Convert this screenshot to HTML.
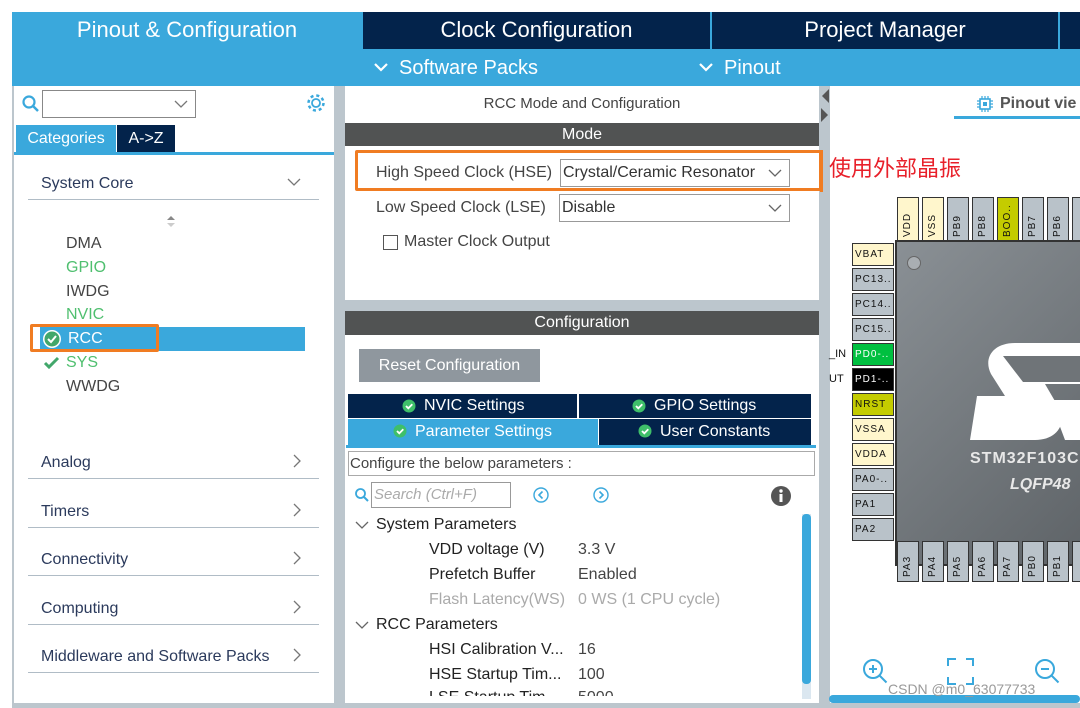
<!DOCTYPE html>
<html><head><meta charset="utf-8"><style>
*{margin:0;padding:0;box-sizing:border-box}
body{width:1080px;height:708px;background:#fff;position:relative;overflow:hidden;font-family:"Liberation Sans","Noto Sans CJK SC",sans-serif;color:#333}
.a{position:absolute}
.t{position:absolute;white-space:nowrap}
.pin{position:absolute;background:#b9c2c9;border:1px solid #333;font-size:10px;color:#111;letter-spacing:1px}
.pv{width:22px;height:44px;writing-mode:vertical-rl;transform:rotate(180deg);text-align:left;padding-top:3px;line-height:20px}
.ph{width:42px;height:23px;line-height:22px;padding-left:2px}
.cat{position:absolute;left:28px;width:291px;height:36px;border-bottom:1px solid #b0bcc6;font-size:16px;color:#2b3a5c}
.cat span{position:absolute;left:13px;bottom:6px}
.cat svg{position:absolute;right:18px;bottom:10px}
</style></head><body>
<div class="a" style="left:12px;top:12px;width:1068px;height:74px;background:#3aa8dc"></div>
<div class="a" style="left:363px;top:12px;width:347px;height:37px;background:#03234b"></div>
<div class="a" style="left:712px;top:12px;width:346px;height:37px;background:#03234b"></div>
<div class="a" style="left:1060px;top:12px;width:20px;height:37px;background:#03234b"></div>
<div class="t" style="left:12px;width:350px;top:17px;text-align:center;color:#fff;font-size:22px">Pinout &amp; Configuration</div>
<div class="t" style="left:363px;width:347px;top:17px;text-align:center;color:#fff;font-size:22px">Clock Configuration</div>
<div class="t" style="left:712px;width:346px;top:17px;text-align:center;color:#fff;font-size:22px">Project Manager</div>
<svg class="a" style="left:373px;top:62px" width="16" height="12"><path d="M2 2l6 6 6-6" stroke="#fff" stroke-width="2.2" fill="none"/></svg>
<div class="t" style="left:399px;top:57px;color:#fff;font-size:20px">Software Packs</div>
<svg class="a" style="left:698px;top:62px" width="16" height="12"><path d="M2 2l6 6 6-6" stroke="#fff" stroke-width="2.2" fill="none"/></svg>
<div class="t" style="left:724px;top:57px;color:#fff;font-size:20px">Pinout</div>
<div class="a" style="left:12px;top:86px;width:1068px;height:622px;background:#bcc6cd"></div>
<!-- left panel -->
<div class="a" style="left:14px;top:86px;width:320px;height:617px;background:#fff"></div>
<svg class="a" style="left:21px;top:94px" width="20" height="20"><circle cx="8" cy="8" r="5.5" stroke="#3aa8dc" stroke-width="2.2" fill="none"/><path d="M12 12l5 5" stroke="#3aa8dc" stroke-width="2.5"/></svg>
<div class="a" style="left:42px;top:90px;width:154px;height:28px;border:1px solid #888;background:#fff"></div>
<svg class="a" style="left:174px;top:99px" width="14" height="10"><path d="M1 2l6 6 6-6" stroke="#777" stroke-width="1.3" fill="none"/></svg>
<svg class="a" style="left:305px;top:92px" width="22" height="22" viewBox="0 0 22 22"><circle cx="11" cy="11" r="4" stroke="#3aa8dc" stroke-width="1.8" fill="none"/><circle cx="11" cy="11" r="7.5" stroke="#3aa8dc" stroke-width="2.5" stroke-dasharray="3 2.9" fill="none"/></svg>
<div class="a" style="left:16px;top:125px;width:100px;height:27px;background:#3aa8dc;color:#fff;font-size:16px;line-height:27px;text-align:center">Categories</div>
<div class="a" style="left:117px;top:125px;width:58px;height:27px;background:#03234b;color:#fff;font-size:16px;line-height:27px;text-align:center">A-&gt;Z</div>
<div class="a" style="left:14px;top:152px;width:320px;height:3px;background:#3aa8dc"></div>
<div class="cat" style="top:164px"><span>System Core</span><svg width="14" height="10" style="bottom:12px"><path d="M1 2l6 6 6-6" stroke="#777" stroke-width="1.3" fill="none"/></svg></div>
<svg class="a" style="left:165px;top:214px" width="12" height="14"><path d="M2 6l4-4 4 4z" fill="#888"/><path d="M2 9l4 4 4-4z" fill="#ccc"/></svg>
<div class="t" style="left:66px;top:235px;font-size:16px;color:#444">DMA</div>
<div class="t" style="left:66px;top:259px;font-size:16px;color:#4fbf6f">GPIO</div>
<div class="t" style="left:66px;top:283px;font-size:16px;color:#444">IWDG</div>
<div class="t" style="left:66px;top:306px;font-size:16px;color:#4fbf6f">NVIC</div>
<div class="a" style="left:40px;top:327px;width:265px;height:24px;background:#3aa8dc"></div>
<div class="a" style="left:30px;top:324px;width:129px;height:28px;border:3px solid #f07c22;border-radius:2px"></div>
<svg class="a" style="left:42px;top:329px" width="20" height="20"><circle cx="10" cy="10" r="9" fill="#fff"/><circle cx="10" cy="10" r="7.5" fill="#42a76b"/><path d="M6 10l3 3 5-6" stroke="#fff" stroke-width="2" fill="none"/></svg>
<div class="t" style="left:68px;top:330px;font-size:16px;color:#fff">RCC</div>
<svg class="a" style="left:43px;top:355px" width="18" height="16"><path d="M2 8l4 4 9-9" stroke="#42a76b" stroke-width="3" fill="none"/></svg>
<div class="t" style="left:66px;top:354px;font-size:16px;color:#4fbf6f">SYS</div>
<div class="t" style="left:66px;top:378px;font-size:16px;color:#444">WWDG</div>
<div class="cat" style="top:443px"><span>Analog</span><svg width="8" height="14"><path d="M1 1l6 6-6 6" stroke="#777" stroke-width="1.3" fill="none"/></svg></div>
<div class="cat" style="top:492px"><span>Timers</span><svg width="8" height="14"><path d="M1 1l6 6-6 6" stroke="#777" stroke-width="1.3" fill="none"/></svg></div>
<div class="cat" style="top:540px"><span>Connectivity</span><svg width="8" height="14"><path d="M1 1l6 6-6 6" stroke="#777" stroke-width="1.3" fill="none"/></svg></div>
<div class="cat" style="top:589px"><span>Computing</span><svg width="8" height="14"><path d="M1 1l6 6-6 6" stroke="#777" stroke-width="1.3" fill="none"/></svg></div>
<div class="cat" style="top:637px"><span>Middleware and Software Packs</span><svg width="8" height="14"><path d="M1 1l6 6-6 6" stroke="#777" stroke-width="1.3" fill="none"/></svg></div>
<!-- middle panel -->
<div class="a" style="left:345px;top:86px;width:474px;height:214px;background:#fff"></div>
<div class="t" style="left:345px;width:474px;top:95px;text-align:center;font-size:15px;color:#444">RCC Mode and Configuration</div>
<div class="a" style="left:345px;top:123px;width:474px;height:23px;background:#515353;color:#fff;font-size:16px;text-align:center;line-height:23px">Mode</div>
<div class="a" style="left:355px;top:150px;width:467px;height:41px;border:3px solid #f07c22;border-radius:2px"></div>
<div class="t" style="left:376px;top:164px;font-size:16px;color:#444">High Speed Clock (HSE)</div>
<div class="a" style="left:560px;top:159px;width:230px;height:28px;border:1px solid #999;font-size:16px;line-height:26px;padding-left:2px;color:#333">Crystal/Ceramic Resonator</div>
<div class="t" style="left:376px;top:199px;font-size:16px;color:#444">Low Speed Clock (LSE)</div>
<div class="a" style="left:559px;top:194px;width:231px;height:28px;border:1px solid #999;font-size:16px;line-height:26px;padding-left:2px;color:#333">Disable</div>
<svg class="a" style="left:768px;top:168px" width="14" height="10"><path d="M1 2l6 6 6-6" stroke="#666" stroke-width="1.3" fill="none"/></svg>
<svg class="a" style="left:768px;top:203px" width="14" height="10"><path d="M1 2l6 6 6-6" stroke="#666" stroke-width="1.3" fill="none"/></svg>
<div class="a" style="left:383px;top:235px;width:15px;height:15px;border:1px solid #555"></div>
<div class="t" style="left:404px;top:233px;font-size:16px;color:#444">Master Clock Output</div>
<div class="a" style="left:345px;top:311px;width:474px;height:392px;background:#fff"></div>
<div class="a" style="left:345px;top:311px;width:474px;height:24px;background:#515353;color:#fff;font-size:16px;text-align:center;line-height:24px">Configuration</div>
<div class="a" style="left:359px;top:349px;width:181px;height:33px;background:#8f979e;color:#fff;font-size:16px;line-height:33px;text-align:center">Reset Configuration</div>
<div class="a" style="left:348px;top:394px;width:229px;height:24px;background:#03234b"></div>
<div class="a" style="left:579px;top:394px;width:232px;height:24px;background:#03234b"></div>
<div class="a" style="left:348px;top:419px;width:250px;height:26px;background:#3aa8dc"></div>
<div class="a" style="left:599px;top:419px;width:212px;height:26px;background:#03234b"></div>
<div class="a" style="left:346px;top:445px;width:470px;height:3px;background:#3aa8dc"></div>
<div class="t" style="left:424px;top:397px;font-size:16px;color:#fff">NVIC Settings</div>
<div class="t" style="left:654px;top:397px;font-size:16px;color:#fff">GPIO Settings</div>
<div class="t" style="left:415px;top:423px;font-size:16px;color:#fff">Parameter Settings</div>
<div class="t" style="left:660px;top:423px;font-size:16px;color:#fff">User Constants</div>
<svg class="a" style="left:0;top:0" width="1080" height="708">
<g><circle cx="409" cy="406" r="6.5" fill="#3fbf6a"/><path d="M406 406l2.3 2.3 4-4" stroke="#fff" stroke-width="1.8" fill="none"/></g>
<g><circle cx="639" cy="406" r="6.5" fill="#3fbf6a"/><path d="M636 406l2.3 2.3 4-4" stroke="#fff" stroke-width="1.8" fill="none"/></g>
<g><circle cx="400" cy="431" r="6.5" fill="#3fbf6a"/><path d="M397 431l2.3 2.3 4-4" stroke="#fff" stroke-width="1.8" fill="none"/></g>
<g><circle cx="645" cy="431" r="6.5" fill="#3fbf6a"/><path d="M642 431l2.3 2.3 4-4" stroke="#fff" stroke-width="1.8" fill="none"/></g>
</svg>
<div class="a" style="left:348px;top:451px;width:467px;height:25px;border:1px solid #aaa;font-size:15px;line-height:23px;color:#444;padding-left:1px">Configure the below parameters :</div>
<svg class="a" style="left:354px;top:487px" width="16" height="16"><circle cx="6.5" cy="6.5" r="4.5" stroke="#3aa8dc" stroke-width="1.8" fill="none"/><path d="M10 10l4 4" stroke="#3aa8dc" stroke-width="2"/></svg>
<div class="a" style="left:371px;top:482px;width:140px;height:26px;border:1px solid #999;font-size:15px;line-height:24px;color:#aaa;font-style:italic;padding-left:2px">Search (Ctrl+F)</div>
<svg class="a" style="left:532px;top:486px" width="20" height="20"><circle cx="9" cy="9" r="7" stroke="#3aa8dc" stroke-width="1.4" fill="none"/><path d="M10.5 5.5l-3.5 3.5 3.5 3.5" stroke="#3aa8dc" stroke-width="1.6" fill="none"/></svg>
<svg class="a" style="left:592px;top:486px" width="20" height="20"><circle cx="9" cy="9" r="7" stroke="#3aa8dc" stroke-width="1.4" fill="none"/><path d="M7.5 5.5l3.5 3.5-3.5 3.5" stroke="#3aa8dc" stroke-width="1.6" fill="none"/></svg>
<svg class="a" style="left:770px;top:485px" width="22" height="22"><circle cx="11" cy="11" r="10" fill="#555"/><rect x="9.5" y="9" width="3" height="8" fill="#fff"/><circle cx="11" cy="6" r="1.7" fill="#fff"/></svg>
<svg class="a" style="left:355px;top:520px" width="14" height="10"><path d="M1 2l6 6 6-6" stroke="#666" stroke-width="1.3" fill="none"/></svg>
<div class="t" style="left:376px;top:516px;font-size:16px;color:#222">System Parameters</div>
<div class="t" style="left:429px;top:541px;font-size:16px;color:#222">VDD voltage (V)</div>
<div class="t" style="left:578px;top:541px;font-size:16px;color:#444">3.3 V</div>
<div class="t" style="left:429px;top:566px;font-size:16px;color:#222">Prefetch Buffer</div>
<div class="t" style="left:578px;top:566px;font-size:16px;color:#444">Enabled</div>
<div class="t" style="left:429px;top:591px;font-size:16px;color:#aaa">Flash Latency(WS)</div>
<div class="t" style="left:578px;top:591px;font-size:16px;color:#aaa">0 WS (1 CPU cycle)</div>
<svg class="a" style="left:355px;top:620px" width="14" height="10"><path d="M1 2l6 6 6-6" stroke="#666" stroke-width="1.3" fill="none"/></svg>
<div class="t" style="left:376px;top:616px;font-size:16px;color:#222">RCC Parameters</div>
<div class="t" style="left:429px;top:641px;font-size:16px;color:#222">HSI Calibration V...</div>
<div class="t" style="left:578px;top:641px;font-size:16px;color:#444">16</div>
<div class="t" style="left:429px;top:666px;font-size:16px;color:#222">HSE Startup Tim...</div>
<div class="t" style="left:578px;top:666px;font-size:16px;color:#444">100</div>
<div class="t" style="left:429px;top:689px;font-size:16px;color:#222;height:7px;overflow:hidden">LSE Startup Tim...</div>
<div class="t" style="left:578px;top:689px;font-size:16px;color:#444;height:7px;overflow:hidden">5000</div>
<div class="a" style="left:802px;top:514px;width:9px;height:185px;background:#dbe7f0"></div>
<div class="a" style="left:802px;top:514px;width:9px;height:170px;background:#3aa8dc;border-radius:4px"></div>
<svg class="a" style="left:820px;top:88px" width="10" height="36"><path d="M9 1L2 8l7 7z" fill="#555"/><path d="M1 20l7 7-7 7z" fill="#555"/></svg>
<!-- right panel -->
<div class="a" style="left:830px;top:86px;width:250px;height:617px;background:#fff"></div>
<svg class="a" style="left:976px;top:95px" width="18" height="18"><rect x="4" y="4" width="10" height="10" fill="none" stroke="#3aa8dc" stroke-width="1.6"/><rect x="7" y="7" width="4" height="4" fill="#3aa8dc"/><path d="M6 1v3M9 1v3M12 1v3M6 14v3M9 14v3M12 14v3M1 6h3M1 9h3M1 12h3M14 6h3M14 9h3M14 12h3" stroke="#3aa8dc" stroke-width="1.2"/></svg>
<div class="t" style="left:1000px;top:95px;font-size:16px;font-weight:bold;color:#555">Pinout vie</div>
<div class="a" style="left:954px;top:116px;width:126px;height:3px;background:#3aa8dc"></div>
<div class="t" style="left:829px;top:151px;font-size:22px;color:#e8202a;font-family:'Noto Sans CJK SC',sans-serif">使用外部晶振</div>
<div class="a" style="left:820px;top:150px;width:3px;height:42px;background:#f07c22"></div>
<!-- chip -->
<div class="a" style="left:895px;top:240px;width:190px;height:326px;background:linear-gradient(135deg,#8a9095,#5e6367);border:2px solid #333"></div>
<div class="a" style="left:907px;top:256px;width:14px;height:14px;border-radius:50%;background:#a9aeb2;border:1px solid #666"></div>
<svg class="a" style="left:965px;top:340px" width="115" height="105"><path d="M115 3H50C28 3 18 18 26 34L40 56H12L5 100H70C92 100 102 84 94 68L80 44H115Z" fill="#fff"/><path d="M58 42L38 16H115V42Z" fill="#6f7478"/><path d="M85 60L100 100H115V60Z" fill="#fff"/></svg>
<div class="t" style="left:970px;top:450px;font-size:16px;font-weight:bold;color:#e8e8e8;letter-spacing:1px">STM32F103C</div>
<div class="t" style="left:1010px;top:476px;font-size:16px;font-weight:bold;font-style:italic;color:#e8e8e8">LQFP48</div>
<div class="pin pv" style="left:897px;top:197px;background:#fff6cc">VDD</div>
<div class="pin pv" style="left:922px;top:197px;background:#fff6cc">VSS</div>
<div class="pin pv" style="left:947px;top:197px">PB9</div>
<div class="pin pv" style="left:972px;top:197px">PB8</div>
<div class="pin pv" style="left:997px;top:197px;background:#c4cc00">BOO..</div>
<div class="pin pv" style="left:1022px;top:197px">PB7</div>
<div class="pin pv" style="left:1047px;top:197px">PB6</div>
<div class="pin pv" style="left:1072px;top:197px"></div>
<div class="pin ph" style="left:852px;top:243px;background:#fff6cc">VBAT</div>
<div class="pin ph" style="left:852px;top:268px">PC13..</div>
<div class="pin ph" style="left:852px;top:293px">PC14..</div>
<div class="pin ph" style="left:852px;top:318px">PC15..</div>
<div class="pin ph" style="left:852px;top:343px;background:#00c040;color:#fff">PD0-..</div>
<div class="pin ph" style="left:852px;top:368px;background:#000;color:#fff">PD1-..</div>
<div class="pin ph" style="left:852px;top:393px;background:#c4cc00">NRST</div>
<div class="pin ph" style="left:852px;top:418px;background:#fff6cc">VSSA</div>
<div class="pin ph" style="left:852px;top:443px;background:#fff6cc">VDDA</div>
<div class="pin ph" style="left:852px;top:468px">PA0-..</div>
<div class="pin ph" style="left:852px;top:493px">PA1</div>
<div class="pin ph" style="left:852px;top:518px">PA2</div>
<div class="t" style="left:829px;top:348px;font-size:11px;color:#111">_IN</div>
<div class="t" style="left:829px;top:373px;font-size:11px;color:#111">UT</div>
<div class="pin pv" style="left:897px;top:541px;height:41px;padding-top:4px">PA3</div>
<div class="pin pv" style="left:922px;top:541px;height:41px;padding-top:4px">PA4</div>
<div class="pin pv" style="left:947px;top:541px;height:41px;padding-top:4px">PA5</div>
<div class="pin pv" style="left:972px;top:541px;height:41px;padding-top:4px">PA6</div>
<div class="pin pv" style="left:997px;top:541px;height:41px;padding-top:4px">PA7</div>
<div class="pin pv" style="left:1022px;top:541px;height:41px;padding-top:4px">PB0</div>
<div class="pin pv" style="left:1047px;top:541px;height:41px;padding-top:4px">PB1</div>
<div class="pin pv" style="left:1072px;top:541px;height:41px"></div>
<svg class="a" style="left:861px;top:658px" width="28" height="28"><circle cx="12" cy="11" r="9" stroke="#3aa8dc" stroke-width="2" fill="none"/><path d="M18.5 17.5l7 7M8 11h8M12 7v8" stroke="#3aa8dc" stroke-width="2"/></svg>
<svg class="a" style="left:947px;top:658px" width="28" height="28"><path d="M1 8V1h8M19 1h7v7M26 19v7h-7M9 26H1v-7" stroke="#3aa8dc" stroke-width="2" fill="none"/></svg>
<svg class="a" style="left:1033px;top:658px" width="28" height="28"><circle cx="12" cy="11" r="9" stroke="#3aa8dc" stroke-width="2" fill="none"/><path d="M18.5 17.5l7 7M8 11h8" stroke="#3aa8dc" stroke-width="2"/></svg>
<div class="a" style="left:829px;top:695px;width:251px;height:8px;background:#3aa8dc;border-radius:4px"></div>
<div class="t" style="left:888px;top:681px;font-size:14px;color:#999">CSDN @m0_63077733</div>
</body></html>
